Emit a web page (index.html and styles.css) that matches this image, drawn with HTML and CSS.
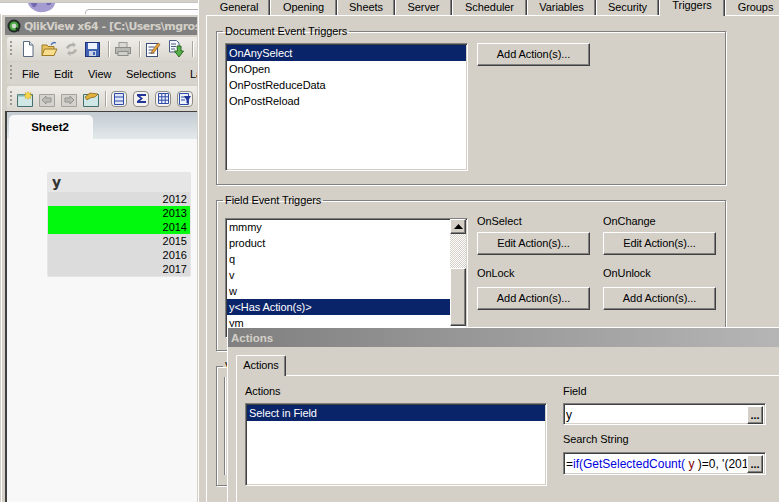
FILE: index.html
```html
<!DOCTYPE html>
<html lang="en">
<head>
<meta charset="utf-8">
<title>QlikView Triggers</title>
<link rel="stylesheet" href="styles.css">
</head>
<body>
<div class="desktop">
  <div class="backwin">
    <svg class="blob" width="30" height="14" viewBox="0 0 30 14"><path d="M1 0h27c1 3-1 8-5 10-6 3-12 3-16 0C3 8 0 4 1 0z" fill="#a49cd0"/><path d="M2 0h8c1 4-1 8-4 7zM18 0h7c0 4-2 6-5 5z" fill="#7168b0"/></svg>
    <i class="backwin-line"></i>
  </div>

  <section class="qlik">
    <header class="qlik-title">
      <svg class="q-logo" width="14" height="14" viewBox="0 0 14 14"><circle cx="7" cy="7" r="6.500" fill="#1f2a22"/><circle cx="7" cy="7" r="4.500" fill="#47a63c"/><circle cx="7" cy="7" r="2.400" fill="#cfd8cc"/><path d="M9 9l3 3" stroke="#1f2a22" stroke-width="2"/></svg>
      <span class="qlik-title-text">QlikView x64 - [C:\Users\mgros</span>
    </header>
    <div class="bar bar-tools">
      <i class="grip"></i>
      <svg class="ic" width="14" height="16" viewBox="0 0 14 16"><path d="M2.500 .5h6l3.500 3.500v11.500h-9.500z" fill="#fff" stroke="#5a6a80"/><path d="M8.500 .5v3.500h3.500" fill="#dfe6ee" stroke="#5a6a80"/></svg>
      <svg class="ic gap-l" width="17" height="16" viewBox="0 0 17 16"><path d="M1 4h5l1 1.500h6v9h-12z" fill="#e9c25e" stroke="#9c7a26"/><path d="M3.500 8h12.500l-3 6.500h-12z" fill="#f7dd8c" stroke="#9c7a26"/><path d="M10 4c1-2 3-3 5-2" fill="none" stroke="#4a6fb3" stroke-width="1.300"/></svg>
      <svg class="ic gap-l" width="15" height="16" viewBox="0 0 15 16"><path d="M2 7C3 4 6 2 9 3l-1-2 4 2.500L9 7l.5-2C7 4.500 5 6 4.500 8zM13 9c-1 3-4 5-7 4l1 2-4-2.500L6 9l-.5 2c2.500.5 4.500-1 5-3z" fill="#b0b0ac"/></svg>
      <svg class="ic gap-l" width="15" height="16" viewBox="0 0 15 16"><rect x=".5" y="1.500" width="14" height="14" fill="#3f62b5" stroke="#1f3478"/><rect x="3" y="2" width="9" height="6" fill="#eef2fa"/><rect x="4" y="10" width="7" height="5" fill="#c9d2e2"/><rect x="8" y="11" width="2" height="3" fill="#3f62b5"/></svg>
      <i class="sep"></i>
      <svg class="ic" width="16" height="16" viewBox="0 0 16 16"><rect x="4" y="1.500" width="8" height="5" fill="#d8d8d4" stroke="#9a9a96"/><rect x=".5" y="6.500" width="15" height="6" fill="#b8b8b4" stroke="#8c8c88"/><rect x="3" y="10.500" width="10" height="4" fill="#cfcfcb" stroke="#8c8c88"/></svg>
      <i class="sep"></i>
      <svg class="ic" width="15" height="16" viewBox="0 0 15 16"><rect x=".5" y="2.500" width="11" height="13" fill="#fff" stroke="#3c4f78"/><path d="M2.500 6h6M2.500 9h5M2.500 12h6" stroke="#3c4f78"/><path d="M6 10l6-8 2 1.500-6 8-3 1z" fill="#e8a33a" stroke="#7a4a16" stroke-width=".6"/></svg>
      <svg class="ic gap-m" width="15" height="18" viewBox="0 0 15 18"><path d="M.5.500h7l2.500 2.500v9h-9.500z" fill="#f4f6fa" stroke="#4a5f86"/><path d="M2 4h5M2 6.500h5M2 9h4" stroke="#4a5f86"/><path d="M8 6h4v5h2.500l-4.500 6-4.500-6h3z" fill="#58b04a" stroke="#2a6a22"/></svg>
      <i class="sep"></i>
      <svg class="ic" width="12" height="14" viewBox="0 0 12 14"><path d="M0 6l6-5v3h6v5h-6v3z" fill="#b4b4b0"/></svg>
    </div>
    <nav class="bar bar-menu">
      <i class="grip"></i>
      <span class="m m-file">File</span>
      <span class="m m-edit">Edit</span>
      <span class="m m-view">View</span>
      <span class="m m-sel">Selections</span>
      <span class="m m-la">La</span>
    </nav>
    <div class="bar bar-nav">
      <i class="grip"></i>
      <svg class="ic" width="16" height="16" viewBox="0 0 16 16"><path d="M.5 3.500h15v12h-15z" fill="#cfe8e6" stroke="#45706e"/><path d="M.5 3.500h8v2h-8z" fill="#7fb4b2"/><path d="M11 .5l1 2 2-1-1 2 2 1-2 1 1 2-2-1-1 2-1-2-2 1 1-2-2-1 2-1-1-2 2 1z" fill="#f5d94a" stroke="#d9a520" stroke-width=".5"/></svg>
      <svg class="ic gap-s" width="16" height="16" viewBox="0 0 16 16"><path d="M.5 3.500h15v12h-15z" fill="#d4d2cc" stroke="#a4a29c"/><path d="M3 9l4-4v2h5v4H7v2z" fill="#bcbab4" stroke="#96948e"/></svg>
      <svg class="ic gap-s" width="16" height="16" viewBox="0 0 16 16"><path d="M.5 3.500h15v12h-15z" fill="#d4d2cc" stroke="#a4a29c"/><path d="M13 9L9 5v2H4v4h5v2z" fill="#bcbab4" stroke="#96948e"/></svg>
      <svg class="ic gap-s" width="16" height="16" viewBox="0 0 16 16"><path d="M.5 3.500h15v12h-15z" fill="#cfe8e6" stroke="#45706e"/><path d="M2 6l5-4 8 1-3 3-5 1-3 2z" fill="#e3b23c" stroke="#7a5a16" stroke-width=".7"/></svg>
      <i class="sep sep-nav"></i>
      <b class="round"><svg width="10" height="12" viewBox="0 0 10 12"><path d="M.5.500h9v11h-9zM.5 4h9M.5 8h9" fill="#dfe6f6" stroke="#2d4aa8"/></svg></b>
      <b class="round"><svg width="11" height="11" viewBox="0 0 11 11"><path d="M1 1h9v2H4l3 2.500L4 8h6v2H1V8l3.500-2.500L1 3z" fill="#22369a"/></svg></b>
      <b class="round"><svg width="11" height="11" viewBox="0 0 11 11"><path d="M.5.500h10v10H.5zM.5 3.800h10M.5 7.200h10M3.800.5v10M7.200.5v10" fill="#eef2fb" stroke="#2d4aa8"/></svg></b>
      <b class="round"><svg width="12" height="12" viewBox="0 0 12 12"><path d="M.5.500h9v11h-9zM2 4h5M2 7h4" fill="#eef2fb" stroke="#2d4aa8"/><path d="M5 3h7L9.500 7v4l-2-1V7z" fill="#22369a"/></svg></b>
    </div>
    <div class="tabstrip"><div class="sheet-tab">Sheet2</div></div>
    <main class="canvas">
      <div class="listbox">
        <div class="lb-head">y</div>
        <div class="lb-row">2012</div>
        <div class="lb-row on">2013</div>
        <div class="lb-row on">2014</div>
        <div class="lb-row">2015</div>
        <div class="lb-row">2016</div>
        <div class="lb-row">2017</div>
      </div>
    </main>
  </section>

  <section class="dialog">
    <div class="tabs">
      <span class="tab t-general">General</span>
      <span class="tab t-opening">Opening</span>
      <span class="tab t-sheets">Sheets</span>
      <span class="tab t-server">Server</span>
      <span class="tab t-sched">Scheduler</span>
      <span class="tab t-vars">Variables</span>
      <span class="tab t-sec">Security</span>
      <span class="tab t-trig active">Triggers</span>
      <span class="tab t-groups">Groups</span>
    </div>
    <div class="panel">
      <fieldset class="group g-doc">
        <legend>Document Event Triggers</legend>
        <div class="group-row">
          <ul class="list list-doc">
            <li class="sel">OnAnySelect</li>
            <li>OnOpen</li>
            <li>OnPostReduceData</li>
            <li>OnPostReload</li>
          </ul>
          <button class="btn">Add Action(s)...</button>
        </div>
      </fieldset>

      <fieldset class="group g-field">
        <legend>Field Event Triggers</legend>
        <div class="group-row">
          <div class="list list-field">
            <ul class="list-items">
              <li>mmmy</li>
              <li>product</li>
              <li>q</li>
              <li>v</li>
              <li>w</li>
              <li class="sel">y&lt;Has Action(s)&gt;</li>
              <li>ym</li>
            </ul>
            <div class="scroll">
              <span class="sb-up"><svg width="9" height="5" viewBox="0 0 9 5"><path d="M4.500 0L9 5H0z" fill="#000"/></svg></span>
              <span class="sb-track"></span>
              <span class="sb-thumb"></span>
            </div>
          </div>
          <div class="triggers">
            <div class="trigger"><label>OnSelect</label><button class="btn">Edit Action(s)...</button></div>
            <div class="trigger"><label>OnChange</label><button class="btn">Edit Action(s)...</button></div>
            <div class="trigger"><label>OnLock</label><button class="btn">Add Action(s)...</button></div>
            <div class="trigger"><label>OnUnlock</label><button class="btn">Add Action(s)...</button></div>
          </div>
        </div>
      </fieldset>

      <fieldset class="group g-var">
        <legend>Variable Event Triggers</legend>
        <div class="var-list"></div>
      </fieldset>
    </div>
  </section>

  <section class="modal">
    <header class="modal-title">Actions</header>
    <div class="modal-tabs"><span class="modal-tab">Actions</span></div>
    <div class="modal-panel">
      <div class="col-left">
        <label>Actions</label>
        <ul class="list list-actions"><li class="sel">Select in Field</li></ul>
      </div>
      <div class="col-right">
        <label>Field</label>
        <div class="input"><span class="input-text">y</span><button class="dots">...</button></div>
        <label class="lbl-search">Search String</label>
        <div class="input input-search"><span class="input-text code">=<span class="kw">if(GetSelectedCount(</span> <span class="fld">y</span> )=0, '(201</span><button class="dots">...</button></div>
      </div>
    </div>
  </section>
</div>
</body>
</html>
```

FILE: styles.css
```css
* { box-sizing: border-box; }
html, body { margin: 0; padding: 0; }
body {
  width: 779px;
  height: 502px;
  overflow: hidden;
  background: #d4d0c8;
  font-family: "Liberation Sans", Arial, sans-serif;
  font-size: 11px;
  letter-spacing: -.08px;
  color: #000;
}
ul { list-style: none; margin: 0; padding: 0; }
button { font: inherit; letter-spacing: inherit; color: inherit; margin: 0; padding: 0; }

.desktop { position: relative; width: 779px; height: 502px; overflow: hidden; }

/* window behind */
.backwin {
  position: absolute;
  left: 0;
  top: 2px;
  width: 198px;
  height: 12px;
  background: #fff;
  border-top: 1px solid #c4c4c4;
  overflow: hidden;
}
.blob { position: absolute; left: 27px; top: -3px; }
.backwin-line {
  position: absolute;
  left: 85px;
  top: 6px;
  width: 120px;
  height: 12px;
  border: 1px solid #b4b4b4;
  border-radius: 4px 0 0 0;
}

/* QlikView window */
.qlik {
  position: absolute;
  left: 1px;
  top: 14px;
  width: 197px;
  height: 488px;
  border-left: 1px solid #fff;
  border-top: 1px solid #fff;
  background: #d4d0c8;
  padding: 2px 0 0 3px;
  display: flex;
  flex-direction: column;
}
.qlik-title {
  height: 18px;
  width: 192px;
  display: flex;
  align-items: center;
  gap: 3px;
  padding-left: 2px;
  background: #808080;
  overflow: hidden;
  flex: none;
}
.q-logo { flex: none; }
.qlik-title-text {
  color: #d4d0c8;
  font: bold 11px "DejaVu Sans", sans-serif;
  white-space: nowrap;
  letter-spacing: -.5px;
}
.bar {
  display: flex;
  align-items: center;
  width: 190px;
  margin-left: 2px;
  overflow: hidden;
  flex: none;
  padding-left: 3px;
  border-radius: 3px 0 0 3px;
  background: linear-gradient(#efede8, #d9d6cf);
}
.bar-tools { height: 24px; margin-top: 2px; }
.bar-menu { height: 22px; margin-top: 1px; background: #d8d5ce; padding-top: 2px; }
.bar-nav { height: 25px; margin-top: 2px; }
.grip {
  width: 2px;
  height: 16px;
  flex: none;
  background: repeating-linear-gradient(#9d9a92 0 2px, transparent 2px 4px);
  margin-right: 9px;
}
.bar-menu .grip { margin-right: 10px; margin-top: -2px; }
.ic { flex: none; }
.gap-l { margin-left: 6px; }
.gap-m { margin-left: 8px; }
.gap-s { margin-left: 6px; }
.sep { width: 1px; height: 16px; background: #a8a59d; box-shadow: 1px 0 0 #fff; margin: 0 6px 0 8px; flex: none; }
.sep-nav { margin: 0 5px 0 6px; }
.bar-menu .m { white-space: nowrap; flex: none; }
.m-file { width: 32px; }
.m-edit { width: 34px; }
.m-view { width: 38px; }
.m-sel { width: 64px; }
.bar-nav .grip { margin-right: 5px; }
.round {
  width: 16px;
  height: 16px;
  flex: none;
  margin-right: 6px;
  border: 1px solid #8d8b85;
  border-radius: 4px;
  background: #f4f3ef;
  display: flex;
  align-items: center;
  justify-content: center;
}
.tabstrip {
  height: 28px;
  width: 192px;
  flex: none;
  border-top: 1px solid #404040;
  border-left: 2px solid #404040;
  background: linear-gradient(#c3ccd2, #e3e8eb);
  padding: 3px 0 0 2px;
}
.sheet-tab {
  width: 84px;
  height: 24px;
  background: #f8f8f8;
  border-radius: 5px 5px 0 0;
  font-weight: bold;
  font-size: 11.5px;
  letter-spacing: 0;
  text-align: center;
  line-height: 25px;
  padding-right: 2px;
}
.canvas {
  flex: 1;
  width: 192px;
  background: #f8f8f8;
  border-left: 2px solid #404040;
  padding: 33px 0 0 40px;
}
.listbox {
  width: 144px;
  padding: 0 1px 1px;
  background: #e6e6e6;
  border-radius: 2px;
}
.lb-head {
  height: 20px;
  font: bold 14px/20px "DejaVu Sans", sans-serif;
  color: #333;
  padding-left: 4px;
}
.lb-row {
  height: 14px;
  line-height: 14px;
  background: #dcdcdc;
  text-align: right;
  padding-right: 3px;
  font-size: 11px;
  letter-spacing: 0;
}
.lb-row.on { background: #00f90c; }

/* Document properties dialog */
.dialog {
  position: absolute;
  left: 198px;
  top: 0;
  width: 581px;
  height: 502px;
  border-left: 1px solid #fff;
  background: #d4d0c8;
  padding-left: 7px;
}
.tabs { display: flex; height: 16px; }
.tab {
  flex: none;
  height: 15px;
  border-right: 1px solid #404040;
  box-shadow: inset -1px 0 0 #808080;
  border-left: 1px solid #fff;
  text-align: center;
  line-height: 14px;
  white-space: nowrap;
}
.t-general { width: 64px; border-left: 0; padding-left: 3px; }
.t-opening { width: 67px; }
.t-sheets { width: 58px; }
.t-server { width: 57px; }
.t-sched { width: 75px; }
.t-vars { width: 69px; }
.t-sec { width: 63px; }
.t-trig { width: 66px; }
.t-groups { width: 60px; border-right: 0; box-shadow: none; }
.tab.active { height: 16px; line-height: 11px; position: relative; z-index: 1; background: #d4d0c8; }
.panel {
  margin-top: -1px;
  height: 487px;
  border-top: 1px solid #fff;
  border-left: 1px solid #fff;
  padding: 9px 0 0 9px;
}
.group {
  margin: 0 0 9px;
  padding: 5px 8px 0;
  width: 510px;
  min-width: 0;
  border: 1px solid #808080;
  box-shadow: 1px 1px 0 #fff, inset 1px 1px 0 #fff;
}
.group legend {
  padding: 0 2px;
  margin-left: -2px;
  height: 13px;
  line-height: 13px;
  white-space: nowrap;
}
.g-doc { height: 160px; }
.g-field { height: 157px; padding-top: 11px; }
.g-var { height: 126px; margin-top: 9px; }
.group-row { display: flex; gap: 9px; align-items: flex-start; }
.var-list { width: 60px; height: 98px; margin-top: -1px; border-left: 1px solid #fff; box-shadow: -1px 0 0 #808080; }

.list {
  background: #fff;
  border: 1px solid;
  border-color: #808080 #fff #fff #808080;
  box-shadow: inset 1px 1px 0 #404040, inset -1px -1px 0 #d4d0c8;
  padding: 1px;
  overflow: hidden;
}
.list li { height: 16px; line-height: 16px; padding-left: 2px; white-space: nowrap; }
.list li.sel { background: #0a246a; color: #fff; }
.list-doc { width: 243px; height: 128px; }
.list-field { width: 243px; height: 120px; display: flex; padding: 0 1px 0 1px; flex: none; }
.list-items { flex: 1; }
.scroll { width: 16px; flex: none; display: flex; flex-direction: column; }
.sb-up, .sb-thumb {
  background: #d4d0c8;
  border: 1px solid;
  border-color: #fff #404040 #404040 #fff;
  box-shadow: inset -1px -1px 0 #808080;
  display: flex;
  align-items: center;
  justify-content: center;
}
.sb-up { height: 15px; }
.sb-track { height: 34px; background: repeating-conic-gradient(#d4d0c8 0 25%, #fff 0 50%) 0 0 / 2px 2px; }
.sb-thumb { height: 58px; }

.btn {
  width: 113px;
  height: 23px;
  padding-bottom: 2px;
  background: #d4d0c8;
  border: 1px solid;
  border-color: #fff #404040 #404040 #fff;
  box-shadow: inset -1px -1px 0 #808080;
  text-align: center;
  cursor: default;
  flex: none;
}
.triggers { display: grid; grid-template-columns: 113px 113px; column-gap: 13px; row-gap: 12px; margin-top: -3px; }
.trigger label { display: block; height: 13px; line-height: 13px; }
.trigger .btn { margin-top: 4px; display: block; }
.trigger:nth-child(n+3) .btn { margin-top: 7px; }

/* Actions modal */
.modal {
  position: absolute;
  left: 227px;
  top: 327px;
  width: 552px;
  height: 175px;
  border-top: 1px solid #fff;
  border-left: 1px solid #fff;
  background: #d4d0c8;
  z-index: 2;
}
.modal-title {
  height: 19px;
  line-height: 20px;
  padding-left: 3px;
  font-weight: bold;
  font-size: 11.5px;
  letter-spacing: 0;
  color: #d4d0c8;
  background: linear-gradient(90deg, #808080, #b5b5b5);
}
.modal-tabs { display: flex; padding: 8px 0 0 8px; height: 28px; }
.modal-tab {
  width: 50px;
  height: 21px;
  border-top: 1px solid #fff;
  border-left: 1px solid #fff;
  border-right: 1px solid #404040;
  box-shadow: inset -1px 0 0 #808080;
  border-radius: 2px 2px 0 0;
  text-align: center;
  line-height: 19px;
  position: relative;
  z-index: 1;
  background: #d4d0c8;
}
.modal-panel {
  margin-left: 8px;
  border-top: 1px solid #fff;
  border-left: 1px solid #fff;
  padding: 9px 0 0 8px;
  display: flex;
  gap: 16px;
  height: 127px;
}
.col-left label, .col-right label { display: block; height: 13px; line-height: 13px; }
.col-left { width: 302px; flex: none; }
.list-actions { margin-top: 5px; height: 83px; width: 302px; }
.col-right { width: 203px; flex: none; }
.col-right > label:first-child { margin-bottom: 5px; }
.lbl-search { margin: 8px 0 6px; }
.input {
  height: 22px;
  width: 203px;
  display: flex;
  background: #fff;
  border: 1px solid;
  border-color: #808080 #fff #fff #808080;
  box-shadow: inset 1px 1px 0 #404040, inset -1px -1px 0 #d4d0c8;
  padding: 2px;
}
.input-search { height: 23px; }
.input-text { flex: 1; min-width: 0; overflow: hidden; white-space: nowrap; line-height: 18px; font-size: 12px; letter-spacing: 0; padding-left: 0; }
.code { color: #000; }
.kw { color: #0000e0; }
.fld { color: #800000; }
.dots {
  width: 16px;
  height: 18px;
  flex: none;
  background: #d4d0c8;
  border: 1px solid;
  border-color: #fff #404040 #404040 #fff;
  box-shadow: inset -1px -1px 0 #808080;
  font-weight: bold;
  line-height: 17px;
  cursor: default;
}
```
